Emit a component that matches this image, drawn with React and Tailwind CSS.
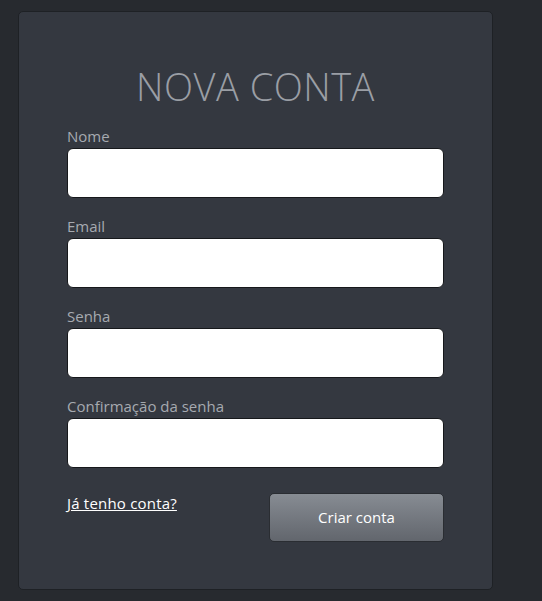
import { useState } from 'react';

const fields = [
  { name: 'nome', label: 'Nome', type: 'text' },
  { name: 'email', label: 'Email', type: 'email' },
  { name: 'senha', label: 'Senha', type: 'password' },
  { name: 'confirmacao', label: 'Confirmação da senha', type: 'password' },
];

const App = () => {
  const [form, setForm] = useState({ nome: '', email: '', senha: '', confirmacao: '' });

  const handleChange = (e) => {
    setForm({ ...form, [e.target.name]: e.target.value });
  };

  return (
    <div className="min-h-[601px] bg-[#272a2f] pt-[11px] pl-[18px] font-['Open_Sans','Noto_Sans',sans-serif]">
      <div className="w-[475px] h-[579px] bg-[#343840] border border-[#1e2125] rounded-[5px] px-12 pt-[54px]">
        <h1 className="text-center text-[38px] leading-[40px] font-light text-[#9a9ea5] tracking-[0.5px] mb-[20px]">
          NOVA CONTA
        </h1>
        <form onSubmit={(e) => e.preventDefault()} className="flex flex-col gap-[18px]">
          {fields.map((f) => (
            <div key={f.name}>
              <label className="block text-[15px] leading-[20px] text-[#a6aab0] mb-[2px]">{f.label}</label>
              <input
                name={f.name}
                type={f.type}
                value={form[f.name]}
                onChange={handleChange}
                className="w-full h-[50px] bg-white border border-[#16181b] rounded-[6px] px-3 text-[15px] outline-none"
              />
            </div>
          ))}
          <div className="flex justify-between items-start mt-[7px]">
            <a href="#" className="text-[15px] leading-[20px] text-white underline tracking-[0.2px]">Já tenho conta?</a>
            <button type="submit" className="w-[175px] h-[49px] rounded-[5px] border border-[#2a2d32] bg-gradient-to-b from-[#878c93] to-[#62666d] text-white text-[15px]">
              Criar conta
            </button>
          </div>
        </form>
      </div>
    </div>
  );
};

export default App;
